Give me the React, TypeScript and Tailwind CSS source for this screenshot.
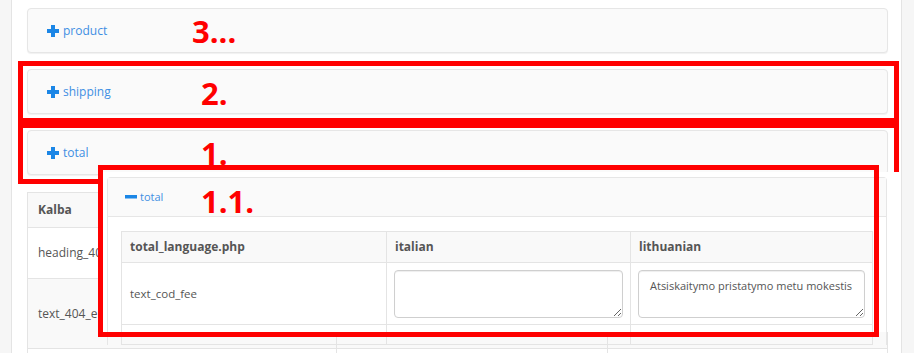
import { ReactNode } from "react";

const font = { fontFamily: '"Open Sans", "Liberation Sans", sans-serif' };

function PlusIcon() {
    return (
        <svg width="12" height="12" viewBox="0 0 12 12">
            <rect x="4" y="0" width="4" height="12" fill="#1b86e6" />
            <rect x="0" y="4" width="12" height="4" fill="#1b86e6" />
        </svg>
    );
}

function MinusIcon() {
    return (
        <svg width="12" height="4" viewBox="0 0 12 4">
            <rect x="0" y="0" width="12" height="3.5" fill="#1b86e6" />
        </svg>
    );
}

function PanelHeading({ label }: { label: string }) {
    return (
        <div className="flex h-[45px] items-center rounded-[4px] border border-[#e6e6e6] bg-[#fafafa] pl-[19px] shadow-[0_1px_1px_rgba(0,0,0,0.06)]">
            <PlusIcon />
            <span className="ml-[4px] text-[12px] text-[#3f8fe3]">{label}</span>
        </div>
    );
}

function Label({ children, className }: { children: ReactNode; className: string }) {
    return (
        <span className={`absolute text-[31px] font-bold leading-none text-[#ff0000] ${className}`}>{children}</span>
    );
}

function Area({ text }: { text?: string }) {
    return (
        <textarea
            readOnly
            wrap="off"
            defaultValue={text}
            className="block h-[48px] w-full overflow-hidden rounded-[4px] border border-[#cfcfcf] pl-[11px] pr-[4px] pt-[7px] text-[11px] text-[#555] shadow-[inset_0_1px_1px_rgba(0,0,0,0.07)] outline-none"
        />
    );
}

export default function App() {
    return (
        <div style={font} className="relative flex h-[353px] w-[914px] overflow-hidden bg-[#f6f6f6]">
            <div className="w-[12px] border-r border-[#e4e4e4]" />
            <main className="w-[890px] border-r border-[#e4e4e4] bg-white pl-[15px] pr-[13px] pt-[8px]">
                <div className="flex flex-col gap-[16px]">
                    <PanelHeading label="product" />
                    <PanelHeading label="shipping" />
                    <PanelHeading label="total" />
                </div>

                <table className="mt-[17px] w-full table-fixed border-collapse text-[12px] text-[#555]">
                    <colgroup>
                        <col className="w-[309px]" />
                        <col className="w-[271px]" />
                        <col />
                    </colgroup>
                    <thead>
                        <tr className="h-[35px] bg-[#f9f9f9]">
                            <th className="border border-[#e4e4e4] px-[10px] text-left font-bold">Kalba</th>
                            <th className="border border-[#e4e4e4] px-[10px] text-left font-bold">italian</th>
                            <th className="border border-[#e4e4e4] px-[10px] text-left font-bold">lithuanian</th>
                        </tr>
                    </thead>
                    <tbody>
                        <tr className="h-[51px]">
                            <td className="border border-[#e4e4e4] px-[10px]">heading_404_title</td>
                            <td className="border border-[#e4e4e4] px-[8px]" />
                            <td className="border border-[#e4e4e4] px-[8px]" />
                        </tr>
                        <tr className="h-[70px] bg-[#f9f9f9]">
                            <td className="border border-[#e4e4e4] px-[10px]">text_404_error</td>
                            <td className="border border-[#e4e4e4] pl-[8px] pr-[9px] pt-[10px] align-top">
                                <Area />
                            </td>
                            <td className="border border-[#e4e4e4] pl-[8px] pr-[20px] pt-[10px] align-top">
                                <Area />
                            </td>
                        </tr>
                        <tr className="h-[40px]">
                            <td className="border border-[#e4e4e4]" />
                            <td className="border border-[#e4e4e4]" />
                            <td className="border border-[#e4e4e4]" />
                        </tr>
                    </tbody>
                </table>
            </main>

            {/* annotation boxes 2. and 1. */}
            <div className="absolute left-[18px] top-[61px] h-[62px] w-[881px] border-[5px] border-[#ff0000]" />
            <div className="absolute left-[18px] top-[123px] h-[61px] w-[881px] border-[5px] border-[#ff0000]" />

            {/* nested total panel spilling over the table */}
            <div className="absolute left-[103px] top-[172px] h-[160px] w-[797px] bg-white">
                <div className="ml-[4px] mt-[5px] w-[780px] rounded-t-[4px] border border-b-0 border-[#e6e6e6]">
                    <div className="flex h-[39px] items-center border-b border-[#e6e6e6] bg-[#fafafa] pl-[17px]">
                        <MinusIcon />
                        <span className="ml-[3px] text-[11px] text-[#3f8fe3]">total</span>
                    </div>
                    <div className="px-[13px] pt-[14px]">
                        <table className="w-full table-fixed border-collapse text-[12px] text-[#555]">
                            <colgroup>
                                <col className="w-[265px]" />
                                <col className="w-[244px]" />
                                <col />
                            </colgroup>
                            <thead>
                                <tr className="h-[31px] bg-[#f9f9f9]">
                                    <th className="border border-[#e4e4e4] px-[8px] text-left font-bold">total_language.php</th>
                                    <th className="border border-[#e4e4e4] px-[8px] text-left font-bold">italian</th>
                                    <th className="border border-[#e4e4e4] px-[8px] text-left font-bold">lithuanian</th>
                                </tr>
                            </thead>
                            <tbody>
                                <tr className="h-[62px]">
                                    <td className="border border-[#e4e4e4] px-[8px] text-[11.5px]">text_cod_fee</td>
                                    <td className="border border-[#e4e4e4] px-[7px] pb-[6px] pt-[7px] align-top">
                                        <Area />
                                    </td>
                                    <td className="border border-[#e4e4e4] px-[7px] pb-[6px] pt-[7px] align-top">
                                        <Area text="Atsiskaitymo pristatymo metu mokestis" />
                                    </td>
                                </tr>
                                <tr className="h-[20px]">
                                    <td className="border border-[#e4e4e4]" />
                                    <td className="border border-[#e4e4e4]" />
                                    <td className="border border-[#e4e4e4]" />
                                </tr>
                            </tbody>
                        </table>
                    </div>
                </div>
            </div>

            {/* annotation box 1.1. */}
            <div className="absolute left-[98px] top-[165px] h-[172px] w-[781px] border-[5px] border-[#ff0000]" />

            <Label className="left-[192px] top-[16px]">3...</Label>
            <Label className="left-[201px] top-[78px]">2.</Label>
            <Label className="left-[201px] top-[138px]">1.</Label>
            <Label className="left-[201px] top-[186px]">1.1.</Label>
        </div>
    );
}
